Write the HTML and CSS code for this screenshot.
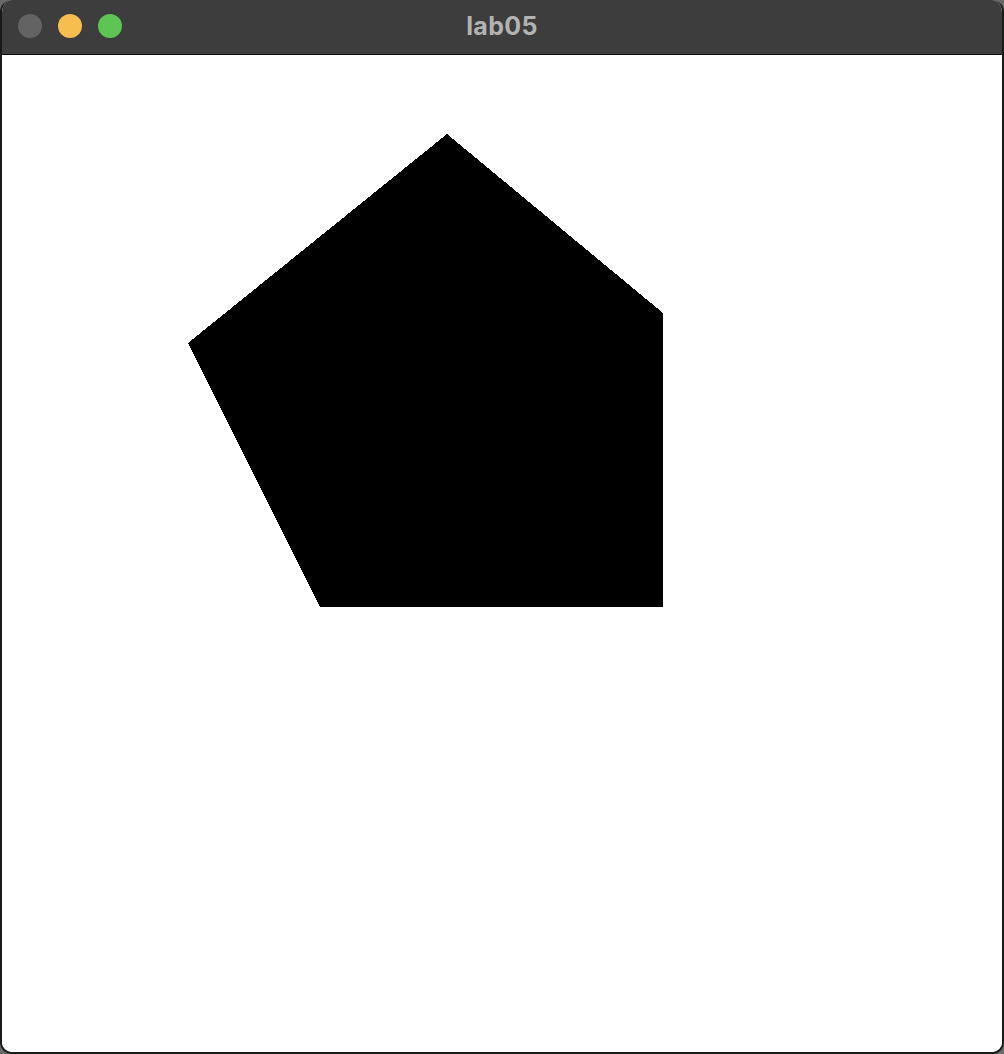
FILE: index.html
```html
<!DOCTYPE html>
<html>
<head>
<meta charset="utf-8">
<title>lab05</title>
<link rel="stylesheet" href="styles.css">
</head>
<body>
<div class="window">
  <div class="titlebar">
    <div class="lights">
      <span class="light close"></span>
      <span class="light min"></span>
      <span class="light max"></span>
    </div>
    <div class="title">lab05</div>
  </div>
  <div class="content">
    <svg class="canvas" width="999" height="997" viewBox="0 0 999 997">
      <polygon points="445,79 661,258 661,552 318,552 186,288" fill="#000" shape-rendering="crispEdges"/>
    </svg>
  </div>
</div>
</body>
</html>
```
FILE: styles.css
```css
html, body {
  margin: 0;
  padding: 0;
  width: 1004px;
  height: 1054px;
  background: #6a6a6a;
  overflow: hidden;
}
.window {
  width: 1004px;
  height: 1054px;
  box-sizing: border-box;
  border: 2px solid #1a1a1a;
  border-top: none;
  border-radius: 12px;
  overflow: hidden;
  display: flex;
  flex-direction: column;
  background: #fff;
}
.titlebar {
  height: 54px;
  flex: none;
  background: #3d3d3d;
  border-bottom: 1px solid #0c0c0c;
  position: relative;
  display: flex;
  align-items: center;
}
.lights {
  display: flex;
  gap: 16px;
  padding-left: 16px;
}
.light {
  width: 24px;
  height: 24px;
  border-radius: 50%;
  display: block;
  margin-top: -2px;
}
.close { background: #636363; }
.min { background: #f6bd4f; }
.max { background: #5ec554; }
.title {
  position: absolute;
  left: 0;
  right: 0;
  top: 0;
  height: 52px;
  line-height: 52px;
  text-align: center;
  font-family: Inter, "Liberation Sans", sans-serif;
  font-weight: 700;
  font-size: 25px;
  letter-spacing: 0.3px;
  color: #b3b3b3;
}
.content {
  flex: 1;
  background: #fff;
  position: relative;
}
.canvas {
  display: block;
}
```
